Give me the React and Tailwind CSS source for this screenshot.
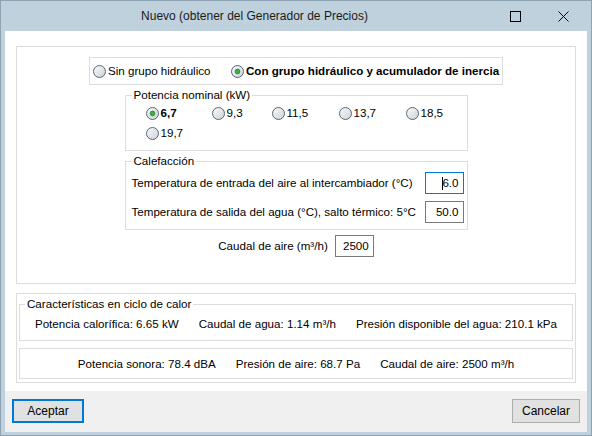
import React from 'react';

const POTENCIAS = [
  { label: '6,7', width: 'w-[66px]', checked: true },
  { label: '9,3', width: 'w-[60px]' },
  { label: '11,5', width: 'w-[67px]' },
  { label: '13,7', width: 'w-[67px]' },
  { label: '18,5', width: '' },
];

const Radio = ({ checked = false }) => (
  <svg width="13" height="13" viewBox="0 0 13 13" className="shrink-0">
    <defs>
      <linearGradient id="radioFill" x1="0" y1="0" x2="1" y2="1">
        <stop offset="0" stopColor="#fbfbfb" />
        <stop offset="1" stopColor="#cdd1d6" />
      </linearGradient>
    </defs>
    <circle cx="6.5" cy="6.5" r="6" fill="url(#radioFill)" stroke="#56677a" strokeWidth="1" />
    {checked && <circle cx="6.5" cy="6.5" r="2.4" fill="#3cb043" stroke="#1d7a2b" strokeWidth="0.7" />}
  </svg>
);

const RadioItem = ({ label, checked, bold, className = '' }) => (
  <div className={`flex items-center ${className}`}>
    <Radio checked={checked} />
    <span className={`ml-[2px] whitespace-nowrap ${bold ? 'font-bold' : ''}`}>{label}</span>
  </div>
);

const Field = ({ value, focused = false }) => (
  <div
    className={`w-[39px] h-[22px] shrink-0 flex items-center justify-end pr-[4px] bg-white border ${
      focused ? 'border-[#0078d7]' : 'border-[#7a7a7a]'
    }`}
  >
    {focused && <span className="inline-block w-px h-[13px] bg-black -mr-[1px]" />}
    <span>{value}</span>
  </div>
);

const Legend = ({ children, className = '' }) => (
  <legend className={`px-[2px] leading-[16px] ${className}`}>{children}</legend>
);

export default function App() {
  return (
    <div className="w-[592px] h-[436px] bg-[#bfd1dc] border border-[#8ea4b5] flex flex-col text-black text-[11.6px] leading-[16px] font-['Liberation_Sans',Arial,sans-serif]">
      {/* title bar */}
      <div className="h-[30px] shrink-0 flex items-center">
        <div className="w-[490px] pl-[17px] text-center text-[12px] text-[#1a1a1a]">
          Nuevo (obtener del Generador de Precios)
        </div>
        <div className="w-[48px] h-full flex items-center justify-center">
          <div className="w-[11px] h-[11px] border border-black" />
        </div>
        <div className="w-[48px] h-full flex items-center justify-center">
          <svg width="11" height="11" viewBox="0 0 11 11">
            <path d="M0.5 0.5 L10.5 10.5 M10.5 0.5 L0.5 10.5" stroke="#000" strokeWidth="1" />
          </svg>
        </div>
      </div>

      <div className="mx-[4px] flex flex-col">
        {/* main panel */}
        <div className="h-[360px] bg-white px-[11px] pt-[15px]">
          <div className="h-[238px] border border-[#dcdcdc] flex flex-col items-center pt-[10px]">
            <div className="w-[414px] h-[28px] border border-[#dcdcdc] flex items-center pl-[3px]">
              <RadioItem label="Sin grupo hidráulico" className="w-[138px]" />
              <RadioItem label="Con grupo hidráulico y acumulador de inercia" checked bold />
            </div>

            <fieldset className="mt-[2px] w-[343px] border border-[#dcdcdc]">
              <Legend className="ml-[6px]">Potencia nominal (kW)</Legend>
              <div className="pl-[20px] pb-[7px]">
                <div className="h-[20px] flex items-center">
                  {POTENCIAS.map((p) => (
                    <RadioItem key={p.label} label={p.label} checked={p.checked} bold={p.checked} className={p.width} />
                  ))}
                </div>
                <div className="h-[20px] flex items-center">
                  <RadioItem label="19,7" />
                </div>
              </div>
            </fieldset>

            <fieldset className="mt-[2px] w-[343px] border border-[#dcdcdc]">
              <Legend className="ml-[6px]">Calefacción</Legend>
              <div className="pl-[6px] pr-[3px] pt-[3px] pb-[6px] flex flex-col gap-[7px]">
                <div className="flex items-center">
                  <span className="whitespace-nowrap">Temperatura de entrada del aire al intercambiador (°C)</span>
                  <div className="ml-auto">
                    <Field value="6.0" focused />
                  </div>
                </div>
                <div className="flex items-center">
                  <span className="whitespace-nowrap">Temperatura de salida del agua (°C), salto térmico: 5°C</span>
                  <div className="ml-auto">
                    <Field value="50.0" />
                  </div>
                </div>
              </div>
            </fieldset>

            <div className="mt-[5px] flex items-center">
              <span className="whitespace-nowrap">Caudal de aire (m³/h)</span>
              <div className="ml-[7px]">
                <Field value="2500" />
              </div>
            </div>
          </div>

          <div className="mt-[9px] h-[90px] border border-[#dcdcdc] px-[2px] pt-[2px]">
            <fieldset className="border border-[#dcdcdc]">
              <Legend className="ml-[5px]">Características en ciclo de calor</Legend>
              <div className="pt-[4px] pb-[8px] flex justify-center gap-[20px] whitespace-nowrap">
                <span>Potencia calorífica: 6.65 kW</span>
                <span>Caudal de agua: 1.14 m³/h</span>
                <span>Presión disponible del agua: 210.1 kPa</span>
              </div>
            </fieldset>
            <div className="mt-[7px] h-[31px] border border-[#dcdcdc] flex items-center justify-center gap-[20px] whitespace-nowrap">
              <span>Potencia sonora: 78.4 dBA</span>
              <span>Presión de aire: 68.7 Pa</span>
              <span>Caudal de aire: 2500 m³/h</span>
            </div>
          </div>
        </div>

        {/* footer */}
        <div className="h-[41px] bg-[#f0f0f0] px-[7px] pt-[8px] flex justify-between items-start">
          <button className="w-[72px] h-[24px] border-2 border-[#0078d7] bg-[#e1e1e1] text-[12px]">Aceptar</button>
          <button className="w-[68px] h-[24px] border border-[#adadad] bg-[#e1e1e1] text-[12px]">Cancelar</button>
        </div>
      </div>
    </div>
  );
}
